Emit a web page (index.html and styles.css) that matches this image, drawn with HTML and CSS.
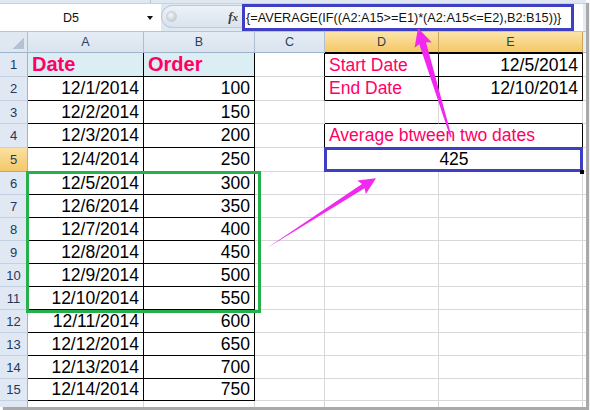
FILE: index.html
```html
<!DOCTYPE html>
<html>
<head>
<meta charset="utf-8">
<link rel="stylesheet" href="styles.css">
</head>
<body>
<div class="window">
  <div class="topstrip"><span class="tick"></span></div>
  <div class="fbar">
    <div class="namebox"><span class="ref">D5</span><span class="dd"></span></div>
    <div class="capsule"><span class="knob"></span><span class="fx"><i>f</i><i class="x">x</i></span></div>
    <div class="formula">{=AVERAGE(IF((A2:A15&gt;=E1)*(A2:A15&lt;=E2),B2:B15))}</div>
    <div class="fbar-rest"></div>
  </div>
  <div class="sheet">
    <div class="corner"></div><div class="ch">A</div><div class="ch">B</div><div class="ch">C</div><div class="ch sel">D</div><div class="ch sel">E</div><div class="ch end"></div>

    <div class="rh">1</div><div class="c blk hd">Date</div><div class="c blk hd">Order</div><div class="c rblk"></div><div class="c blk tb pink">Start Date</div><div class="c blk tb num">12/5/2014</div><div class="c end"></div>

    <div class="rh">2</div><div class="c blk num">12/1/2014</div><div class="c blk num">100</div><div class="c rblk"></div><div class="c blk pink">End Date</div><div class="c blk num">12/10/2014</div><div class="c end"></div>

    <div class="rh">3</div><div class="c blk num">12/2/2014</div><div class="c blk num">150</div><div class="c"></div><div class="c bblk"></div><div class="c bblk"></div><div class="c end"></div>

    <div class="rh">4</div><div class="c blk num">12/3/2014</div><div class="c blk num">200</div><div class="c rblk"></div><div class="c blk span2 pink">Average btween two dates</div><div class="c end"></div>

    <div class="rh sel">5</div><div class="c blk num">12/4/2014</div><div class="c blk num">250</div><div class="c rblk"></div><div class="c blk span2 center active">425<span class="handle"></span></div><div class="c end"></div>

    <div class="rh">6</div><div class="c blk num">12/5/2014</div><div class="c blk num">300</div><div class="c"></div><div class="c"></div><div class="c"></div><div class="c end"></div>

    <div class="rh">7</div><div class="c blk num">12/6/2014</div><div class="c blk num">350</div><div class="c"></div><div class="c"></div><div class="c"></div><div class="c end"></div>

    <div class="rh">8</div><div class="c blk num">12/7/2014</div><div class="c blk num">400</div><div class="c"></div><div class="c"></div><div class="c"></div><div class="c end"></div>

    <div class="rh">9</div><div class="c blk num">12/8/2014</div><div class="c blk num">450</div><div class="c"></div><div class="c"></div><div class="c"></div><div class="c end"></div>

    <div class="rh">10</div><div class="c blk num">12/9/2014</div><div class="c blk num">500</div><div class="c"></div><div class="c"></div><div class="c"></div><div class="c end"></div>

    <div class="rh">11</div><div class="c blk num">12/10/2014</div><div class="c blk num">550</div><div class="c"></div><div class="c"></div><div class="c"></div><div class="c end"></div>

    <div class="rh">12</div><div class="c blk num">12/11/2014</div><div class="c blk num">600</div><div class="c"></div><div class="c"></div><div class="c"></div><div class="c end"></div>

    <div class="rh">13</div><div class="c blk num">12/12/2014</div><div class="c blk num">650</div><div class="c"></div><div class="c"></div><div class="c"></div><div class="c end"></div>

    <div class="rh">14</div><div class="c blk num">12/13/2014</div><div class="c blk num">700</div><div class="c"></div><div class="c"></div><div class="c"></div><div class="c end"></div>

    <div class="rh">15</div><div class="c blk num">12/14/2014</div><div class="c blk num">750</div><div class="c"></div><div class="c"></div><div class="c"></div><div class="c end"></div>

    <div class="rh last"></div><div class="c last"></div><div class="c last"></div><div class="c last"></div><div class="c last"></div><div class="c last"></div><div class="c end last"></div>
  </div>
</div>
<div class="green-box"></div>
<svg class="arrows" width="590" height="410" viewBox="0 0 590 410">
  <polygon points="267,248 362,184 357.3,180.4 376,178.2 365.9,194 364.6,188.2" fill="#f028f0"/>
  <polygon points="450.3,137.2 419.3,44.3 414.6,47.8 418,28 431.8,42.6 426,42.3 451.7,136.8" fill="#f028f0"/>
</svg>
</body>
</html>
```

FILE: styles.css
```css
html, body {
  margin: 0;
  padding: 0;
}
body {
  position: relative;
  width: 590px;
  height: 410px;
  overflow: hidden;
  background: #ffffff;
  font-family: "Liberation Sans", Arial, sans-serif;
}
.window {
  width: 586px;
  height: 407px;
  background: #ffffff;
  box-shadow: 3px 3px 1px #a9a9a9;
  display: flex;
  flex-direction: column;
  overflow: hidden;
}
.topstrip {
  position: relative;
  height: 3px;
  background: #dfe7f1;
  border-bottom: 1px solid #c6d2e0;
  flex: none;
}
.tick {
  position: absolute;
  left: 150px;
  top: 0;
  width: 1px;
  height: 3px;
  background: #b7c4d4;
}
.fbar {
  display: flex;
  height: 27px;
  flex: none;
  background: #dfe7f1;
  border-bottom: 1px solid #b6c4d5;
}
.namebox {
  width: 161px;
  background: #ffffff;
  display: flex;
  align-items: center;
  position: relative;
}
.ref {
  width: 142px;
  text-align: center;
  font-size: 12.5px;
  color: #111;
}
.dd {
  width: 0;
  height: 0;
  border-left: 3.5px solid transparent;
  border-right: 3.5px solid transparent;
  border-top: 4px solid #111;
  margin-left: 5px;
  margin-top: 1px;
}
.capsule {
  width: 81px;
  margin: 1px 0 3px 0;
  border: 1px solid #bccada;
  border-right: none;
  border-radius: 12px 0 0 12px;
  background: linear-gradient(#edf2f8, #d9e3ee);
  display: flex;
  align-items: center;
  box-sizing: border-box;
}
.knob {
  width: 9px;
  height: 9px;
  border-radius: 50%;
  margin-left: 4px;
  background: radial-gradient(circle at 40% 35%, #f4f6f8, #b9c0c8);
  border: 1px solid #c7ced6;
}
.fx {
  margin-left: auto;
  margin-right: 4px;
  font-family: "Liberation Serif", serif;
  font-weight: bold;
  font-size: 13px;
  color: #3b3b3b;
}
.fx i { font-style: italic; }
.fx .x { font-size: 11px; }
.formula {
  width: 332px;
  box-sizing: border-box;
  border: 3px solid #3f3fc4;
  background: #ffffff;
  font-size: 12.7px;
  color: #111;
  display: flex;
  align-items: center;
  padding-left: 1px;
  white-space: nowrap;
}
.fbar-rest {
  flex: 1;
  background: #ffffff;
  border-right: 3px solid #e4eaf2;
}
.sheet {
  flex: 1;
  display: grid;
  grid-template-columns: 28px 116px 111px 70px 114px 144px 3px;
  grid-template-rows: 21px 24px 24px 23px 24px 24px repeat(9, 23px) 22px 1fr;
}
.corner {
  background: linear-gradient(to bottom right, transparent 50%, #b4c2d6 50%) right 3px bottom 3px / 11px 11px no-repeat, #dfe7f1;
  border-right: 1px solid #aebfd3;
  border-bottom: 1px solid #9fb3ca;
}
.ch {
  background: linear-gradient(#e5ecf5, #dae4ef);
  border-right: 1px solid #aebfd3;
  border-bottom: 1px solid #9fb3ca;
  display: flex;
  align-items: center;
  justify-content: center;
  font-size: 12.5px;
  color: #27405f;
}
.ch.sel {
  background: linear-gradient(#fbe4a9, #f4c865);
  border-right-color: #c9a65c;
  border-bottom-color: #000;
}
.ch.end {
  background: #e6ecf4;
  border-right: none;
}
.rh {
  background: #e0e8f3;
  border-right: 1px solid #9fb3ca;
  border-bottom: 1px solid #c3d1e2;
  display: flex;
  align-items: center;
  justify-content: center;
  font-size: 13px;
  color: #21395c;
}
.rh.sel {
  background: linear-gradient(#fae0a1, #f3c86b);
  border-bottom-color: #c9a65c;
}
.rh.last { border-bottom: none; }
.c {
  border-right: 1px solid #d8d8d8;
  border-bottom: 1px solid #d8d8d8;
  display: flex;
  align-items: center;
  font-size: 17.5px;
  color: #000;
  padding: 0 3px 0 4px;
  white-space: nowrap;
  min-width: 0;
}
.c.last { border-bottom: none; }
.c.end { border-right: none; }
.num { justify-content: flex-end; padding-right: 4px; }
.blk { border-right-color: #000; border-bottom-color: #000; }
.rblk { border-right-color: #000; }
.bblk { border-bottom-color: #000; }
.tb { border-top: 1px solid #000; }
.hd {
  background: #dbeef4;
  color: #ff0066;
  font-weight: bold;
  font-size: 20px;
}
.pink { color: #ff0066; }
.span2 { grid-column: span 2; }
.center { justify-content: center; }
.active { position: relative; }
.active::after {
  content: "";
  position: absolute;
  left: -1px;
  top: -1px;
  right: -1px;
  bottom: -1px;
  border: 3px solid #3f3fc4;
}
.handle {
  position: absolute;
  right: -2px;
  bottom: -3px;
  width: 4px;
  height: 4px;
  background: #000;
  z-index: 2;
}
.green-box {
  position: absolute;
  left: 26px;
  top: 171px;
  width: 235px;
  height: 142px;
  box-sizing: border-box;
  border: 3px solid #26b04b;
}
.arrows {
  position: absolute;
  left: 0;
  top: 0;
  pointer-events: none;
}
```
